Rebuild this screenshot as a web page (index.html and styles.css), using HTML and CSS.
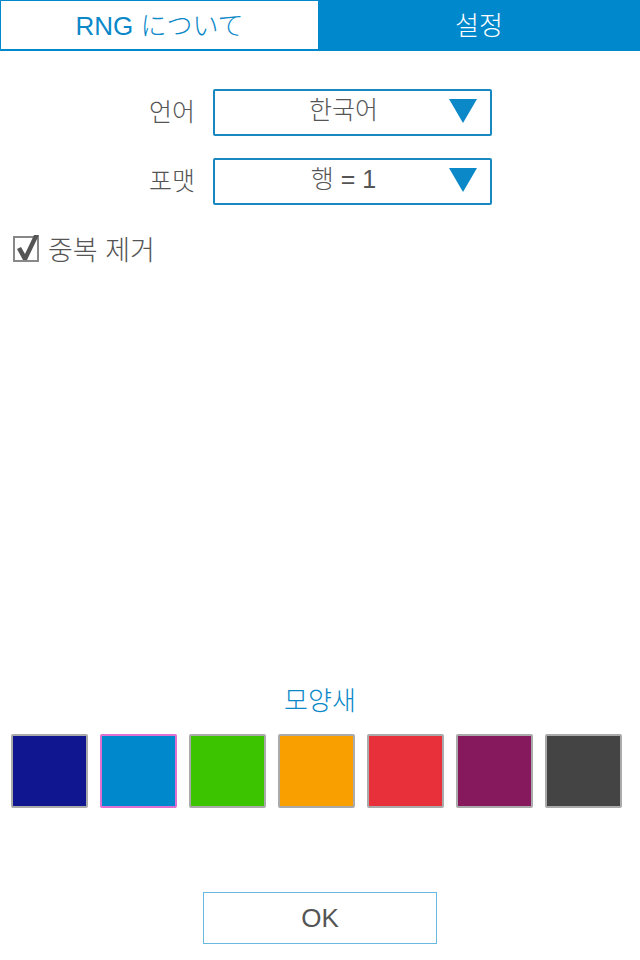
FILE: index.html
```html
<!DOCTYPE html>
<html lang="ko">
<head>
  <meta charset="UTF-8">
  <title>설정</title>
  <link rel="stylesheet" href="styles.css">
</head>
<body>
  <div class="tabs">
    <div class="tab active">RNG について</div>
    <div class="tab">설정</div>
  </div>

  <div class="form">
    <div class="form-row">
      <span class="form-label">언어</span>
      <div class="select">
        <span class="select-value">한국어</span>
        <svg class="select-arrow" width="30" height="26" viewBox="0 0 30 26"><polygon points="1,1 29,1 15,25" fill="#0a88c8"/></svg>
      </div>
    </div>
    <div class="form-row">
      <span class="form-label">포맷</span>
      <div class="select">
        <span class="select-value">행 = 1</span>
        <svg class="select-arrow" width="30" height="26" viewBox="0 0 30 26"><polygon points="1,1 29,1 15,25" fill="#0a88c8"/></svg>
      </div>
    </div>
  </div>

  <label class="check">
    <svg class="check-box" width="30" height="30" viewBox="0 0 30 30">
      <rect x="2" y="5" width="24" height="24" fill="#fff" stroke="#888" stroke-width="2"/>
      <path d="M5 17 L9 15 L13 22 L22 3 L27 3 L15 28 L11 28 Z" fill="#555"/>
    </svg>
    <span>중복 제거</span>
  </label>

  <div class="theme">
    <div class="theme-title">모양새</div>
    <div class="swatches">
      <div class="swatch" style="background:#10168f"></div>
      <div class="swatch selected" style="background:#0088cc"></div>
      <div class="swatch" style="background:#3cc400"></div>
      <div class="swatch" style="background:#f9a000"></div>
      <div class="swatch" style="background:#e8303a"></div>
      <div class="swatch" style="background:#86185e"></div>
      <div class="swatch" style="background:#444444"></div>
    </div>
  </div>

  <div class="footer">
    <button class="ok-btn">OK</button>
  </div>
</body>
</html>
```

FILE: styles.css
```css
body { margin: 0; width: 640px; height: 960px; display: flex; flex-direction: column; background: #fff; font-family: 'Liberation Sans', 'Noto Sans CJK KR', sans-serif; font-weight: 300; color: #555; }

.tabs { display: flex; height: 51px; background: #0088cc; padding: 1px 0 0 1px; box-sizing: border-box; }
.tab { flex: 1; display: flex; align-items: center; justify-content: center; height: 48px; font-size: 26px; color: #fff; padding-bottom: 3px; box-sizing: border-box; }
.tab.active { flex: 0 0 317px; background: #fff; color: #0a88c8; }

.form { display: flex; flex-direction: column; gap: 22px; margin-top: 38px; }
.form-row { display: flex; align-items: center; }
.form-label { width: 195px; text-align: right; font-size: 25px; padding-bottom: 6px; }
.select { position: relative; margin-left: 18px; width: 279px; height: 47px; box-sizing: border-box; border: 2px solid #1a88c0; border-radius: 2px; display: flex; align-items: center; justify-content: center; padding-bottom: 10px; }
.select-value { font-size: 25px; color: #555; padding-right: 18px; }
.select-arrow { position: absolute; right: 12px; top: 7px; }

.check { display: flex; align-items: center; gap: 6px; margin: 24px 0 0 12px; font-size: 27px; color: #555; }
.check-box { margin-top: -3px; }

.theme { margin-top: auto; display: flex; flex-direction: column; align-items: center; }
.theme-title { font-size: 26px; color: #0a88c8; margin-bottom: 17px; }
.swatches { display: flex; gap: 12px; align-self: flex-start; padding-left: 11px; }
.swatch { width: 77px; height: 74px; box-sizing: border-box; border: 2px solid #aaa; border-radius: 2px; }
.swatch.selected { border-color: #e070d0; }

.footer { display: flex; justify-content: center; margin-top: 84px; margin-bottom: 16px; }
.ok-btn { width: 234px; height: 52px; background: #fff; border: 1px solid #6ab8e0; font-family: inherit; font-weight: 300; font-size: 26px; color: #555; padding: 0; }
```
